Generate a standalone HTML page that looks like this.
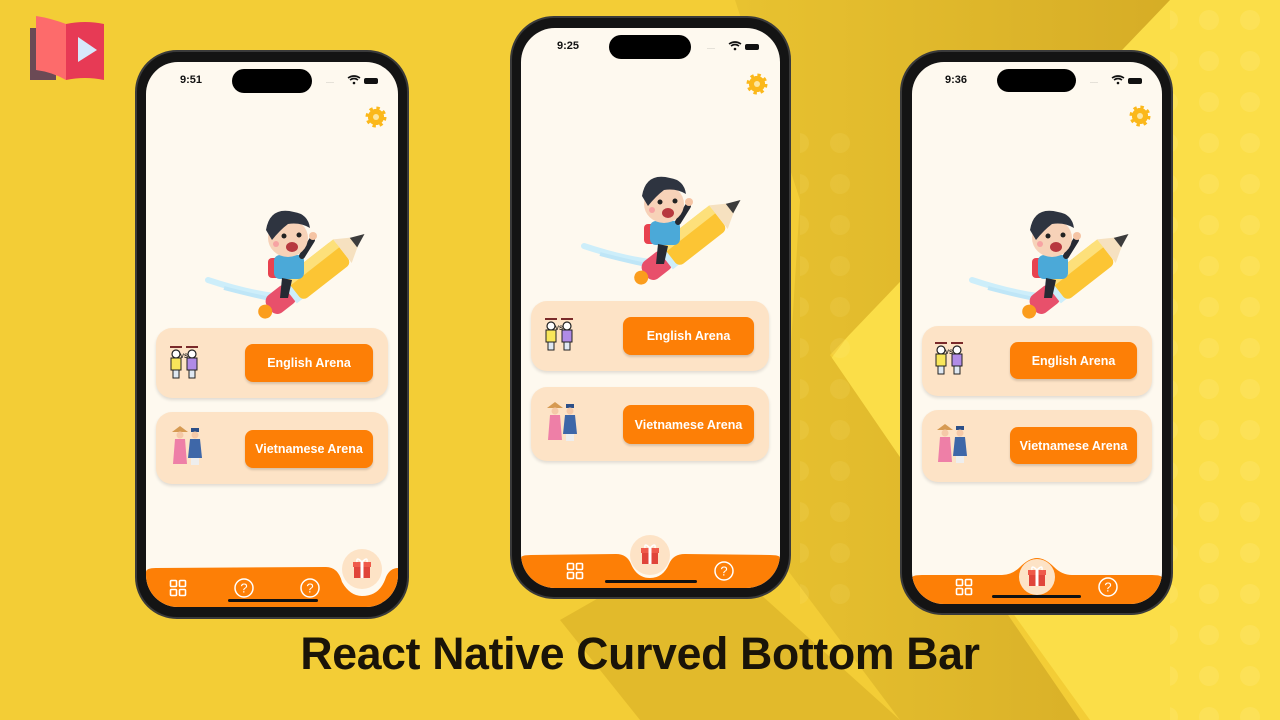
<!DOCTYPE html>
<html><head><meta charset="utf-8"><style>
*{margin:0;padding:0;box-sizing:border-box}
body{width:1280px;height:720px;overflow:hidden;position:relative;background:#f3cd36;font-family:"Liberation Sans",sans-serif}
.abs{position:absolute}
.phone{position:absolute;background:#141414;border:2px solid #3a3a3a}
.screen{position:absolute;background:#fef9ef;overflow:hidden}
.time{position:absolute;font-size:11px;font-weight:bold;color:#111}
.island{position:absolute;background:#000;border-radius:14px}
.card{position:absolute;background:#fde3c6;border-radius:16px;box-shadow:0 2px 3px rgba(0,0,0,.12)}
.btn{position:absolute;background:#fd7f06;border-radius:8px;color:#fff;font-weight:bold;font-size:12.5px;display:flex;align-items:center;justify-content:center;box-shadow:0 2px 2px rgba(0,0,0,.15)}
</style></head><body>
<svg class="abs" style="left:0;top:0" width="1280" height="720">
<defs>
<pattern id="dots" width="41" height="41" patternUnits="userSpaceOnUse"><circle cx="20" cy="20" r="10" fill="#fff0a0" opacity=".5"/></pattern>
<linearGradient id="band" x1="0" y1="0" x2="1" y2="0"><stop offset="0" stop-color="#e8c230"/><stop offset="1" stop-color="#d6ad26"/></linearGradient>
</defs>
<rect width="1280" height="720" fill="#f3cd36"/>
<polygon points="1100,0 1280,0 1280,720 1090,720 830,360" fill="#fbde48"/>
<polygon points="735,0 1170,0 830,355 1080,720 900,720 780,560 790,360 800,200" fill="url(#band)"/>
<polygon points="560,620 700,540 900,720 640,720" fill="#e2ba2b"/>
<rect x="1170" y="0" width="110" height="720" fill="url(#dots)" opacity=".35"/>
<rect x="800" y="120" width="60" height="500" fill="url(#dots)" opacity=".2"/>
<polygon points="30,28 30,80 56,80 56,28" fill="#6b4a55"/>
<path d="M36,16 Q50,18 66,24 L66,80 Q52,72 36,70 Z" fill="#fd6b6b"/>
<path d="M66,24 Q85,20 104,24 L104,80 Q85,76 66,80 Z" fill="#e73a55"/>
<polygon points="78,37 78,62 97,50" fill="#d7e8fb"/>
</svg>

<svg width="0" height="0" style="position:absolute">
<defs>
<g id="kid">
 <path d="M4,80 Q40,92 70,96" stroke="#cdeefa" stroke-width="6" fill="none" stroke-linecap="round"/>
 <path d="M20,88 Q50,96 72,100" stroke="#bfe6f7" stroke-width="4" fill="none"/>
 <g transform="rotate(-38 100 80)">
  <rect x="55" y="70" width="30" height="22" rx="8" fill="#e8506b"/>
  <rect x="80" y="68" width="8" height="26" fill="#cdeefa"/>
  <rect x="86" y="66" width="62" height="30" rx="6" fill="#fcc534"/>
  <rect x="86" y="66" width="62" height="10" fill="#fde07a"/>
  <polygon points="148,66 172,81 148,96" fill="#f6e1c0"/>
  <polygon points="162,75 176,81 162,87" fill="#3c3c3c"/>
  <circle cx="50" cy="81" r="7" fill="#fb9d1d"/>
 </g>
 <rect x="64" y="58" width="12" height="20" rx="4" fill="#e8424f"/>
 <rect x="70" y="55" width="30" height="24" rx="6" fill="#4ba9d8"/>
 <path d="M78,78 L76,98 L84,98 L88,80 Z" fill="#262a33"/>
 <path d="M98,56 L108,40" stroke="#262a33" stroke-width="6" stroke-linecap="round"/>
 <circle cx="109" cy="36" r="4" fill="#f5c4a4"/>
 <ellipse cx="84" cy="38" rx="20" ry="19" fill="#f7d2b8"/>
 <path d="M62,30 Q66,6 90,12 Q104,14 106,28 Q96,22 84,24 Q76,30 68,40 Z" fill="#2e3440"/>
 <circle cx="80" cy="36" r="2.5" fill="#222"/><circle cx="95" cy="35" r="2.5" fill="#222"/>
 <ellipse cx="88" cy="47" rx="6" ry="5" fill="#b7383f"/>
 <circle cx="72" cy="44" r="3" fill="#f7a3a3"/>
</g>
<g id="gear"><circle cx="0" cy="0" r="8" fill="#fbb81b" stroke="#fbb81b" stroke-width="5" stroke-dasharray="3 3.3"/><circle r="8" fill="#fbb81b"/><circle r="3" fill="#fde6a0"/></g>
<g id="vs">
 <rect x="0" y="0" width="12" height="2" fill="#7a2a2a"/><rect x="16" y="0" width="12" height="2" fill="#7a2a2a"/>
 <circle cx="6" cy="8" r="4" fill="#fff" stroke="#222" stroke-width="1.2"/><rect x="1" y="12" width="10" height="12" fill="#f8e65a" stroke="#222" stroke-width="1"/><rect x="3" y="24" width="6" height="8" fill="#dfe8f2" stroke="#222" stroke-width="1"/>
 <circle cx="22" cy="8" r="4" fill="#fff" stroke="#222" stroke-width="1.2"/><rect x="17" y="12" width="10" height="12" fill="#b08be6" stroke="#222" stroke-width="1"/><rect x="19" y="24" width="6" height="8" fill="#dfe8f2" stroke="#222" stroke-width="1"/>
 <text x="10" y="12" font-size="6" font-weight="bold" font-family="Liberation Sans" fill="#222">VS</text>
</g>
<g id="vn">
 <path d="M0,6 L8,0 L16,6 Z" fill="#d69a52"/><circle cx="8" cy="9" r="3.5" fill="#f5c9a8"/><path d="M3,13 L13,13 L15,38 L1,38 Z" fill="#ee7fa7"/>
 <rect x="19" y="2" width="8" height="4" fill="#2c4f88"/><circle cx="23" cy="9" r="3.5" fill="#f5c9a8"/><path d="M18,13 L28,13 L30,32 L16,32 Z" fill="#3e67a8"/><rect x="19" y="32" width="8" height="7" fill="#eee"/>
</g>
<g id="gft"><rect x="-8" y="-4" width="16" height="13" fill="#e0453a"/><rect x="-9" y="-7" width="18" height="5" fill="#ef5a4a"/><rect x="-1.5" y="-7" width="3" height="16" fill="#fff"/><path d="M0,-7 Q-6,-13 -5,-7 M0,-7 Q6,-13 5,-7" stroke="#fff" stroke-width="1.5" fill="none"/></g>
<g id="grid" fill="none" stroke="#fff" stroke-width="1.6"><rect x="-7.5" y="-7.5" width="6" height="6" rx="1"/><rect x="1.5" y="-7.5" width="6" height="6" rx="1"/><rect x="-7.5" y="1.5" width="6" height="6" rx="1"/><rect x="1.5" y="1.5" width="6" height="6" rx="1"/></g>
<g id="q"><circle r="9" fill="none" stroke="#fff" stroke-width="1.5"/><text x="0" y="4.5" text-anchor="middle" font-size="13" font-family="Liberation Sans" fill="#fff">?</text></g>
<g id="stat"><text x="0" y="0" font-size="6" fill="#777">····</text><path d="M22,-6 Q28,-10 34,-6 M24,-4 Q28,-7 32,-4" stroke="#111" stroke-width="1.6" fill="none"/><circle cx="28" cy="-1" r="1.3" fill="#111"/><rect x="38" y="-6" width="14" height="6" rx="2" fill="#111"/></g>
</defs></svg>

<!-- Phone 1 -->
<div class="phone" style="left:135px;top:50px;width:274px;height:569px;border-radius:42px"></div>
<div class="screen" style="left:146px;top:62px;width:252px;height:545px;border-radius:32px">
 <div class="time" style="left:34px;top:12px">9:51</div>
 <div class="island" style="left:86px;top:7px;width:80px;height:24px"></div>
 <div class="card" style="left:10px;top:266px;width:232px;height:70px"></div>
 <div class="btn" style="left:99px;top:282px;width:128px;height:38px">English Arena</div>
 <div class="card" style="left:10px;top:350px;width:232px;height:72px"></div>
 <div class="btn" style="left:99px;top:368px;width:128px;height:38px">Vietnamese Arena</div>
 <svg class="abs" style="left:0;top:0" width="252" height="545">
 <use href="#stat" x="180" y="22"/>
 <use href="#gear" x="230" y="55"/>
 <use href="#kid" x="58" y="138"/>
 <use href="#vs" x="24" y="284"/>
 <use href="#vn" x="26" y="364"/>
 <path d="M0,510 Q0,506 10,506 L180,505 Q192,505 196,520 Q204,534 216,534 Q234,534 240,515 Q244,506 252,506 L252,545 L0,545 Z" fill="#fd7f06"/>
 <circle cx="216" cy="507" r="20" fill="#fde3c6"/>
 <use href="#gft" x="216" y="507"/>
 <use href="#grid" x="32" y="526"/>
 <use href="#q" x="98" y="526"/>
 <use href="#q" x="164" y="526"/>
 <rect x="82" y="537" width="90" height="3" rx="1.5" fill="#111"/>
 </svg>
</div>

<!-- Phone 2 -->
<div class="phone" style="left:510px;top:16px;width:281px;height:583px;border-radius:44px"></div>
<div class="screen" style="left:521px;top:28px;width:259px;height:560px;border-radius:34px">
 <div class="time" style="left:36px;top:12px">9:25</div>
 <div class="island" style="left:88px;top:7px;width:82px;height:24px"></div>
 <div class="card" style="left:10px;top:273px;width:238px;height:70px"></div>
 <div class="btn" style="left:102px;top:289px;width:131px;height:38px">English Arena</div>
 <div class="card" style="left:10px;top:359px;width:238px;height:74px"></div>
 <div class="btn" style="left:102px;top:377px;width:131px;height:39px">Vietnamese Arena</div>
 <svg class="abs" style="left:0;top:0" width="259" height="560">
 <use href="#stat" x="186" y="22"/>
 <use href="#gear" x="236" y="56"/>
 <use href="#kid" x="59" y="138"/>
 <use href="#vs" x="24" y="290"/>
 <use href="#vn" x="26" y="374"/>
 <path d="M0,530 Q0,527 10,527 L95,526 Q106,526 110,536 Q116,550 129,550 Q142,550 148,536 Q152,526 164,526 L249,527 Q259,527 259,530 L259,560 L0,560 Z" fill="#fd7f06"/>
 <circle cx="129" cy="527" r="20" fill="#fde3c6"/>
 <use href="#gft" x="129" y="527"/>
 <use href="#grid" x="54" y="543"/>
 <use href="#q" x="203" y="543"/>
 <rect x="84" y="552" width="92" height="3" rx="1.5" fill="#111"/>
 </svg>
</div>

<!-- Phone 3 -->
<div class="phone" style="left:900px;top:50px;width:273px;height:565px;border-radius:42px"></div>
<div class="screen" style="left:912px;top:62px;width:250px;height:542px;border-radius:32px">
 <div class="time" style="left:33px;top:12px">9:36</div>
 <div class="island" style="left:85px;top:7px;width:79px;height:23px"></div>
 <div class="card" style="left:10px;top:264px;width:230px;height:70px"></div>
 <div class="btn" style="left:98px;top:280px;width:127px;height:37px">English Arena</div>
 <div class="card" style="left:10px;top:348px;width:230px;height:72px"></div>
 <div class="btn" style="left:98px;top:365px;width:127px;height:37px">Vietnamese Arena</div>
 <svg class="abs" style="left:0;top:0" width="250" height="542">
 <use href="#stat" x="178" y="22"/>
 <use href="#gear" x="228" y="54"/>
 <use href="#kid" x="56" y="138"/>
 <use href="#vs" x="23" y="280"/>
 <use href="#vn" x="25" y="362"/>
 <path d="M0,516 Q0,513 10,513 L90,513 Q100,513 108,505 Q117,496 125,496 Q133,496 142,505 Q150,513 160,513 L240,513 Q250,513 250,516 L250,542 L0,542 Z" fill="#fd7f06"/>
 <circle cx="125" cy="515" r="18" fill="#fde3c6"/>
 <use href="#gft" x="125" y="515"/>
 <use href="#grid" x="52" y="525"/>
 <use href="#q" x="196" y="525"/>
 <rect x="80" y="533" width="89" height="3" rx="1.5" fill="#111"/>
 </svg>
</div>

<div class="abs" style="left:190px;top:628px;width:900px;text-align:center;font-size:45px;font-weight:bold;color:#1a1408;transform:scaleX(0.99);letter-spacing:-0.3px">React Native Curved Bottom Bar</div>
</body></html>
